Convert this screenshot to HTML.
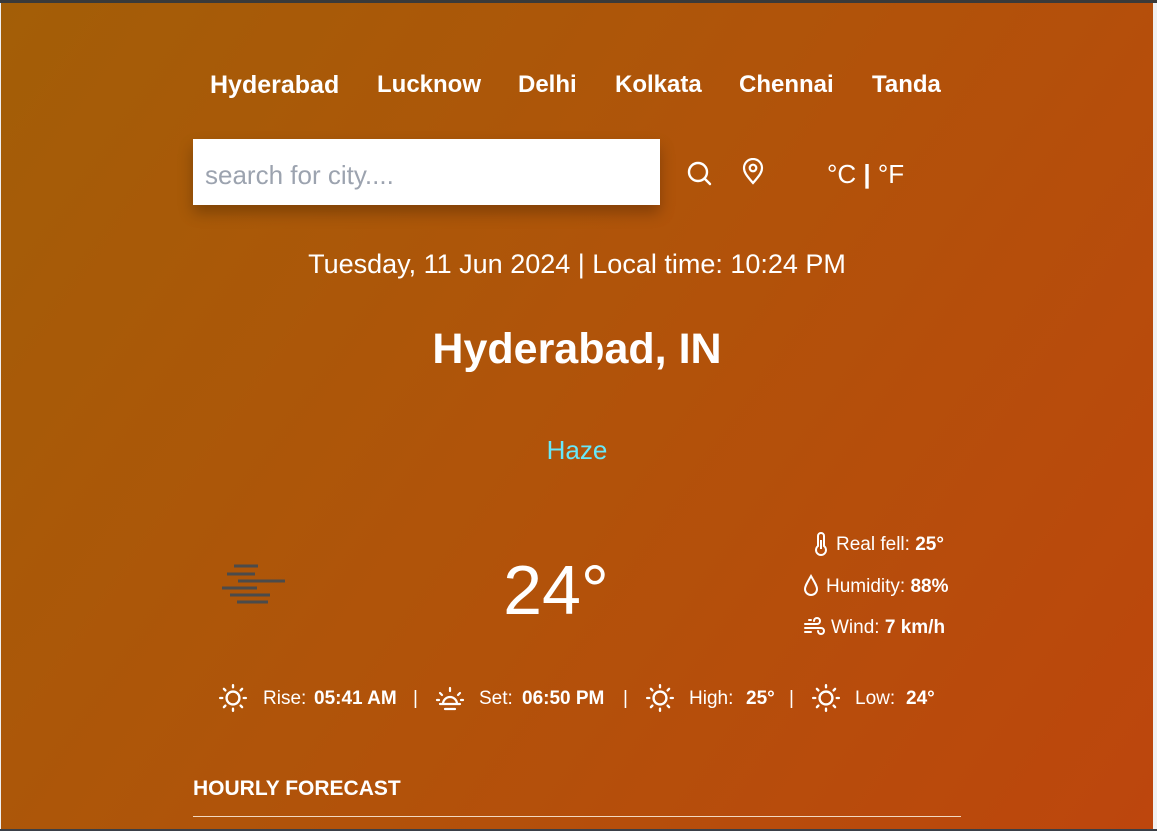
<!DOCTYPE html>
<html><head><meta charset="utf-8"><style>
*{margin:0;padding:0;box-sizing:border-box}
body{width:1157px;height:831px;overflow:hidden;background:#f0f0f0;font-family:"Liberation Sans",sans-serif;position:relative}
.top{position:absolute;left:0;top:0;width:1157px;height:3px;background:#3a3a3a}
.bot{position:absolute;left:0;top:829px;width:1157px;height:2px;background:#3a3f47}
.main{position:absolute;left:1px;top:3px;width:1152px;height:826px;background:linear-gradient(125deg,#a35e07 0%,#b1530a 50%,#bd460d 100%);color:#fff}
.a{position:absolute;white-space:nowrap;line-height:1}
.nav{font-size:24px;font-weight:bold;top:70px}
.c{transform:translateX(-50%)}
.search{position:absolute;left:192px;top:136px;width:467px;height:66px;background:#fff;box-shadow:0 8px 14px rgba(0,0,0,.25);color:#9ca3af;font-size:26px;padding:21px 12px}
.det{font-size:19px;display:flex;align-items:center;gap:6px}
.r{font-size:19px;top:686px}
b{font-weight:bold}
</style></head><body>
<div class="top"></div>
<div class="main">
<div class="a nav" style="left:209px;font-size:25px">Hyderabad</div>
<div class="a nav" style="left:376px">Lucknow</div>
<div class="a nav" style="left:517px">Delhi</div>
<div class="a nav" style="left:614px">Kolkata</div>
<div class="a nav" style="left:738px">Chennai</div>
<div class="a nav" style="left:871px">Tanda</div>
<div class="search">search for city....</div>
<svg class="a" style="left:685px;top:157px" width="28" height="28" viewBox="0 0 28 28" fill="none" stroke="#fff" stroke-width="2.4" stroke-linecap="round"><circle cx="12" cy="12" r="9"/><path d="M19 19l5 5"/></svg>
<svg class="a" style="left:740px;top:155px" width="24" height="28" viewBox="0 0 24 28" fill="none" stroke="#fff" stroke-width="2.2"><path d="M12 25C5 17 3 14 3 10a9 9 0 0118 0c0 4-2 7-9 15z"/><circle cx="12" cy="10" r="3.3"/></svg>
<div class="a" style="left:826px;top:158px;font-size:26px">°C <span style="font-weight:bold">|</span> °F</div>
<div class="a c" style="left:576px;top:248px;font-size:27px">Tuesday, 11 Jun 2024 | Local time: 10:24 PM</div>
<div class="a c" style="left:576px;top:325px;font-size:43px;font-weight:bold">Hyderabad, IN</div>
<div class="a c" style="left:576px;top:434px;font-size:26px;color:#67e8f9">Haze</div>
<svg class="a" style="left:219px;top:558px" width="70" height="46" viewBox="0 0 70 46" stroke="#4b4b4b" stroke-width="3"><path d="M14 5h24M7 13h28M18 20h47M2 27h35M10 34h40M17 41h31"/></svg>
<div class="a c" style="left:555px;top:552px;font-size:70px">24°</div>
<div class="a det" style="left:811px;top:529px"><svg width="18" height="24" viewBox="0 0 18 24" fill="none" stroke="#fff" stroke-width="2"><path d="M6 14V4a3 3 0 016 0v10a5 5 0 11-6 0z"/><path d="M9 8v9"/></svg><span>Real fell: <b>25°</b></span></div>
<div class="a det" style="left:801px;top:571px"><svg width="18" height="24" viewBox="0 0 18 24" fill="none" stroke="#fff" stroke-width="2"><path d="M9 2C5 9 3 12 3 15a6 6 0 0012 0c0-3-2-6-6-13z"/></svg><span>Humidity: <b>88%</b></span></div>
<div class="a det" style="left:802px;top:613px"><svg width="22" height="22" viewBox="0 0 22 22" fill="none" stroke="#fff" stroke-width="2" stroke-linecap="round"><path d="M2 8h12a3 3 0 10-3-3M2 12h16a3 3 0 11-3 3M2 16h6M6 4h2"/></svg><span>Wind: <b>7 km/h</b></span></div>

<svg class="a" style="left:217px;top:680px" width="30" height="30" viewBox="0 0 28 28" fill="none" stroke="#fff" stroke-width="2.2" stroke-linecap="round"><circle cx="14" cy="14" r="6"/><path d="M14 2v2M14 24v2M2 14h2M24 14h2M5.5 5.5l1.4 1.4M21.1 21.1l1.4 1.4M5.5 22.5l1.4-1.4M21.1 6.9l1.4-1.4"/></svg>
<div class="a r" style="left:262px">Rise:</div>
<div class="a r" style="left:313px"><b>05:41 AM</b></div>
<div class="a r" style="left:412px">|</div>
<svg class="a" style="left:433px;top:680px" width="32" height="30" viewBox="0 0 32 28" fill="none" stroke="#fff" stroke-width="2.2" stroke-linecap="round"><path d="M9 20a7 7 0 0114 0zM6 20h20M11 25h10M16 4v3M6 9l2 2M26 9l-2 2M3 16h2M27 16h2"/></svg>
<div class="a r" style="left:478px">Set:</div>
<div class="a r" style="left:521px"><b>06:50 PM</b></div>
<div class="a r" style="left:622px">|</div>
<svg class="a" style="left:644px;top:680px" width="30" height="30" viewBox="0 0 28 28" fill="none" stroke="#fff" stroke-width="2.2" stroke-linecap="round"><circle cx="14" cy="14" r="6"/><path d="M14 2v2M14 24v2M2 14h2M24 14h2M5.5 5.5l1.4 1.4M21.1 21.1l1.4 1.4M5.5 22.5l1.4-1.4M21.1 6.9l1.4-1.4"/></svg>
<div class="a r" style="left:688px">High:</div>
<div class="a r" style="left:745px"><b>25°</b></div>
<div class="a r" style="left:788px">|</div>
<svg class="a" style="left:810px;top:680px" width="30" height="30" viewBox="0 0 28 28" fill="none" stroke="#fff" stroke-width="2.2" stroke-linecap="round"><circle cx="14" cy="14" r="6"/><path d="M14 2v2M14 24v2M2 14h2M24 14h2M5.5 5.5l1.4 1.4M21.1 21.1l1.4 1.4M5.5 22.5l1.4-1.4M21.1 6.9l1.4-1.4"/></svg>
<div class="a r" style="left:854px">Low:</div>
<div class="a r" style="left:905px"><b>24°</b></div>

<div class="a" style="left:192px;top:775px;font-size:21px;font-weight:bold">HOURLY FORECAST</div>
<div class="a" style="left:192px;top:813px;width:768px;height:1px;background:#f3d9c0"></div>
</div>
<div class="bot"></div>
</body></html>
